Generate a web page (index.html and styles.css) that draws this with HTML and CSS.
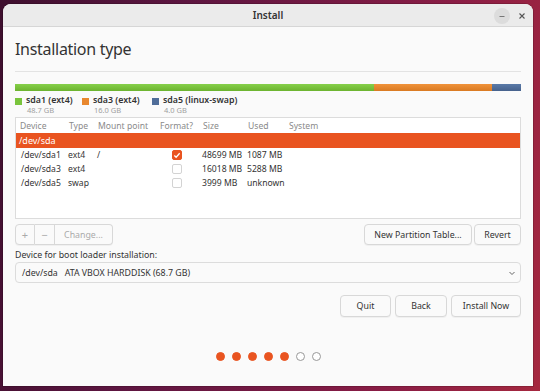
FILE: index.html
```html
<!DOCTYPE html>
<html>
<head>
<meta charset="utf-8">
<link rel="stylesheet" href="styles.css">
</head>
<body>
<div class="desktop">
  <div class="window">
    <div class="titlebar">
      <span class="title">Install</span>
      <div class="wm">
        <span class="wm-btn"><svg width="10" height="10" viewBox="0 0 10 10"><path d="M2.5 5.5h5" stroke="#777" stroke-width="1"/></svg></span>
        <span class="wm-btn"><svg width="10" height="10" viewBox="0 0 10 10"><path d="M2.5 2.5l5 5M7.5 2.5l-5 5" stroke="#555" stroke-width="1.1"/></svg></span>
      </div>
    </div>
    <div class="content">
      <h1 class="heading">Installation type</h1>
      <div class="sep"></div>
      <div class="pbar">
        <div class="seg green" style="width:70.9%"></div>
        <div class="seg orange" style="width:23.3%"></div>
        <div class="seg blue" style="width:5.8%"></div>
      </div>
      <div class="legend">
        <div class="lg"><span class="sw green"></span><div><div class="lname">sda1 (ext4)</div><div class="lsize">48.7 GB</div></div></div>
        <div class="lg"><span class="sw orange"></span><div><div class="lname">sda3 (ext4)</div><div class="lsize">16.0 GB</div></div></div>
        <div class="lg"><span class="sw blue"></span><div><div class="lname">sda5 (linux-swap)</div><div class="lsize">4.0 GB</div></div></div>
      </div>
      <div class="table">
        <div class="row head">
          <span class="c dev">Device</span><span class="c type">Type</span><span class="c mnt">Mount point</span><span class="c fmt">Format?</span><span class="c size">Size</span><span class="c used">Used</span><span class="c sys">System</span>
        </div>
        <div class="row disk"><span class="c">/dev/sda</span></div>
        <div class="row part">
          <span class="c dev">/dev/sda1</span><span class="c type">ext4</span><span class="c mnt">/</span><span class="c fmt"><span class="cb on"><svg width="9" height="9" viewBox="0 0 9 9"><path d="M1.5 4.5l2 2 4-4.5" fill="none" stroke="#fff" stroke-width="1.4"/></svg></span></span><span class="c size">48699 MB</span><span class="c used">1087 MB</span>
        </div>
        <div class="row part">
          <span class="c dev">/dev/sda3</span><span class="c type">ext4</span><span class="c mnt"></span><span class="c fmt"><span class="cb"></span></span><span class="c size">16018 MB</span><span class="c used">5288 MB</span>
        </div>
        <div class="row part">
          <span class="c dev">/dev/sda5</span><span class="c type">swap</span><span class="c mnt"></span><span class="c fmt"><span class="cb"></span></span><span class="c size">3999 MB</span><span class="c used">unknown</span>
        </div>
      </div>
      <div class="tools">
        <div class="group left">
          <span class="btn small sq">+</span><span class="btn small sq">−</span><span class="btn small chg">Change...</span>
        </div>
        <div class="group right">
          <span class="btn npt">New Partition Table...</span><span class="btn rev">Revert</span>
        </div>
      </div>
      <div class="bootlabel">Device for boot loader installation:</div>
      <div class="combo">
        <span>/dev/sda&nbsp;&nbsp;&nbsp;ATA VBOX HARDDISK (68.7 GB)</span>
        <svg width="10" height="10" viewBox="0 0 10 10"><path d="M2.5 4l2.5 2.5 2.5-2.5" fill="none" stroke="#666" stroke-width="1"/></svg>
      </div>
      <div class="actions">
        <span class="btn act">Quit</span><span class="btn act">Back</span><span class="btn act">Install Now</span>
      </div>
      <div class="dots">
        <span class="dot on"></span><span class="dot on"></span><span class="dot on"></span><span class="dot on"></span><span class="dot on"></span><span class="dot"></span><span class="dot"></span>
      </div>
    </div>
  </div>
</div>
</body>
</html>
```
FILE: styles.css
```css
* { box-sizing: border-box; }
html, body { margin: 0; padding: 0; }
body {
  width: 540px; height: 391px; overflow: hidden;
  font-family: "Noto Sans", "DejaVu Sans", sans-serif;
  color: #3d3d3d;
}
.desktop {
  width: 540px; height: 391px;
  background: linear-gradient(100deg, #3e0f2e 0%, #5c1540 30%, #8a1d45 75%, #a5283f 100%);
  padding: 4px 7px 5px 3px;
}
.window {
  width: 530px; height: 382px;
  background: #fafafa;
  border-radius: 8px 8px 0 0;
  display: flex; flex-direction: column;
  overflow: hidden;
  box-shadow: 0 0 0 1px rgba(0,0,0,0.15);
}
.titlebar {
  height: 23px; flex: none;
  background: #ebebeb;
  border-bottom: 1px solid #d6d6d6;
  display: flex; align-items: center; justify-content: center;
  position: relative;
}
.title { font-size: 10px; font-weight: 600; color: #333; }
.wm { position: absolute; right: 3px; top: 4px; display: flex; gap: 4px; }
.wm-btn {
  width: 16px; height: 16px; border-radius: 50%;
  background: #dcdcdc; display: flex; align-items: center; justify-content: center;
}
.wm-btn + .wm-btn { background: transparent; }
.content { padding: 0 12px 0 12px; flex: 1; display: flex; flex-direction: column; }
.heading { font-size: 16px; letter-spacing: -0.3px; font-weight: 400; margin: 10px 0 0 0; height: 25px; line-height: 25px; color: #333; }
.sep { height: 1px; background: #e3e3e3; margin-top: 9px; }
.pbar { display: flex; height: 7px; margin-top: 12px; }
.seg { height: 100%; }
.green { background: #79c43c; }
.orange { background: #e8872e; }
.blue { background: #4f6d99; }
.pbar .green { background: linear-gradient(#86d04a, #6cb32f); }
.pbar .orange { background: linear-gradient(#f0923a, #d97a22); }
.pbar .blue { background: linear-gradient(#5a7aa8, #46628c); }
.legend { display: flex; margin-top: 4px; height: 21px; }
.lg { display: flex; align-items: flex-start; gap: 4px; }
.lg:nth-child(1) { width: 67px; }
.lg:nth-child(2) { width: 70px; }
.sw { width: 7px; height: 7px; margin-top: 3px; flex: none; }
.lname { font-size: 8.8px; font-weight: 600; line-height: 11px; color: #333; }
.lsize { font-size: 7.5px; line-height: 9px; color: #a0a0a0; padding-left: 1px; }
.table {
  margin-top: 1px; height: 102px;
  border: 1px solid #dcdcdc; background: #fff;
}
.row { display: flex; align-items: center; font-size: 8.6px; }
.c { flex: none; white-space: nowrap; }
.head { height: 15px; color: #8a8a8a; padding-left: 4px; }
.disk { height: 15px; background: #e95420; color: #fff; padding-left: 3px; font-size: 9px; }
.part { height: 14px; padding-left: 5px; color: #333; }
.head .dev { width: 49px; }
.part .dev { width: 47px; }
.type { width: 29px; }
.mnt { width: 62px; }
.fmt { width: 43px; }
.part .fmt { display: flex; justify-content: center; padding-right: 8px; }
.size { width: 45px; }
.used { width: 41px; }
.cb {
  width: 10px; height: 10px; border: 1px solid #d3d3d3; border-radius: 2px; background: #fff;
  display: flex; align-items: center; justify-content: center;
}
.cb.on { background: #e95420; border-color: #e95420; }
.tools { display: flex; justify-content: space-between; margin-top: 5px; }
.group { display: flex; gap: 2px; }
.btn {
  display: inline-flex; align-items: center; justify-content: center;
  height: 21px; padding: 0 8px; font-size: 8.8px; color: #333; white-space: nowrap;
  background: #fafafa; border: 1px solid #d8d8d8; border-radius: 4px;
  box-shadow: 0 1px 0 rgba(0,0,0,0.04);
}
.group.left { gap: 0; }
.small { color: #aaa; border-radius: 0; }
.small.sq { width: 20px; padding: 0; font-size: 11px; }
.group.left .btn:first-child { border-radius: 4px 0 0 4px; }
.group.left .btn:last-child { border-radius: 0 4px 4px 0; }
.small + .small { border-left: none; }
.chg { width: 58px; }
.npt { width: 108px; }
.rev { width: 47px; }
.bootlabel { font-size: 8.8px; margin-top: 3px; color: #333; height: 14px; line-height: 14px; }
.combo {
  margin-top: 0; height: 21px; border: 1px solid #dcdcdc; border-radius: 4px; background: #fafafa;
  display: flex; align-items: center; justify-content: space-between; padding: 0 3px 0 6px;
  font-size: 8.8px; color: #333;
}
.actions { display: flex; justify-content: flex-end; gap: 4px; margin-top: 12px; }
.act { height: 22px; }
.act:nth-child(1) { width: 51px; }
.act:nth-child(2) { width: 52px; }
.act:nth-child(3) { width: 70px; }
.dots { display: flex; justify-content: center; gap: 7px; margin-top: 35px; padding-left: 1px; }
.dot { width: 9px; height: 9px; border-radius: 50%; border: 1px solid #999; background: #fff; }
.dot.on { background: #e95420; border-color: #e95420; }
```
